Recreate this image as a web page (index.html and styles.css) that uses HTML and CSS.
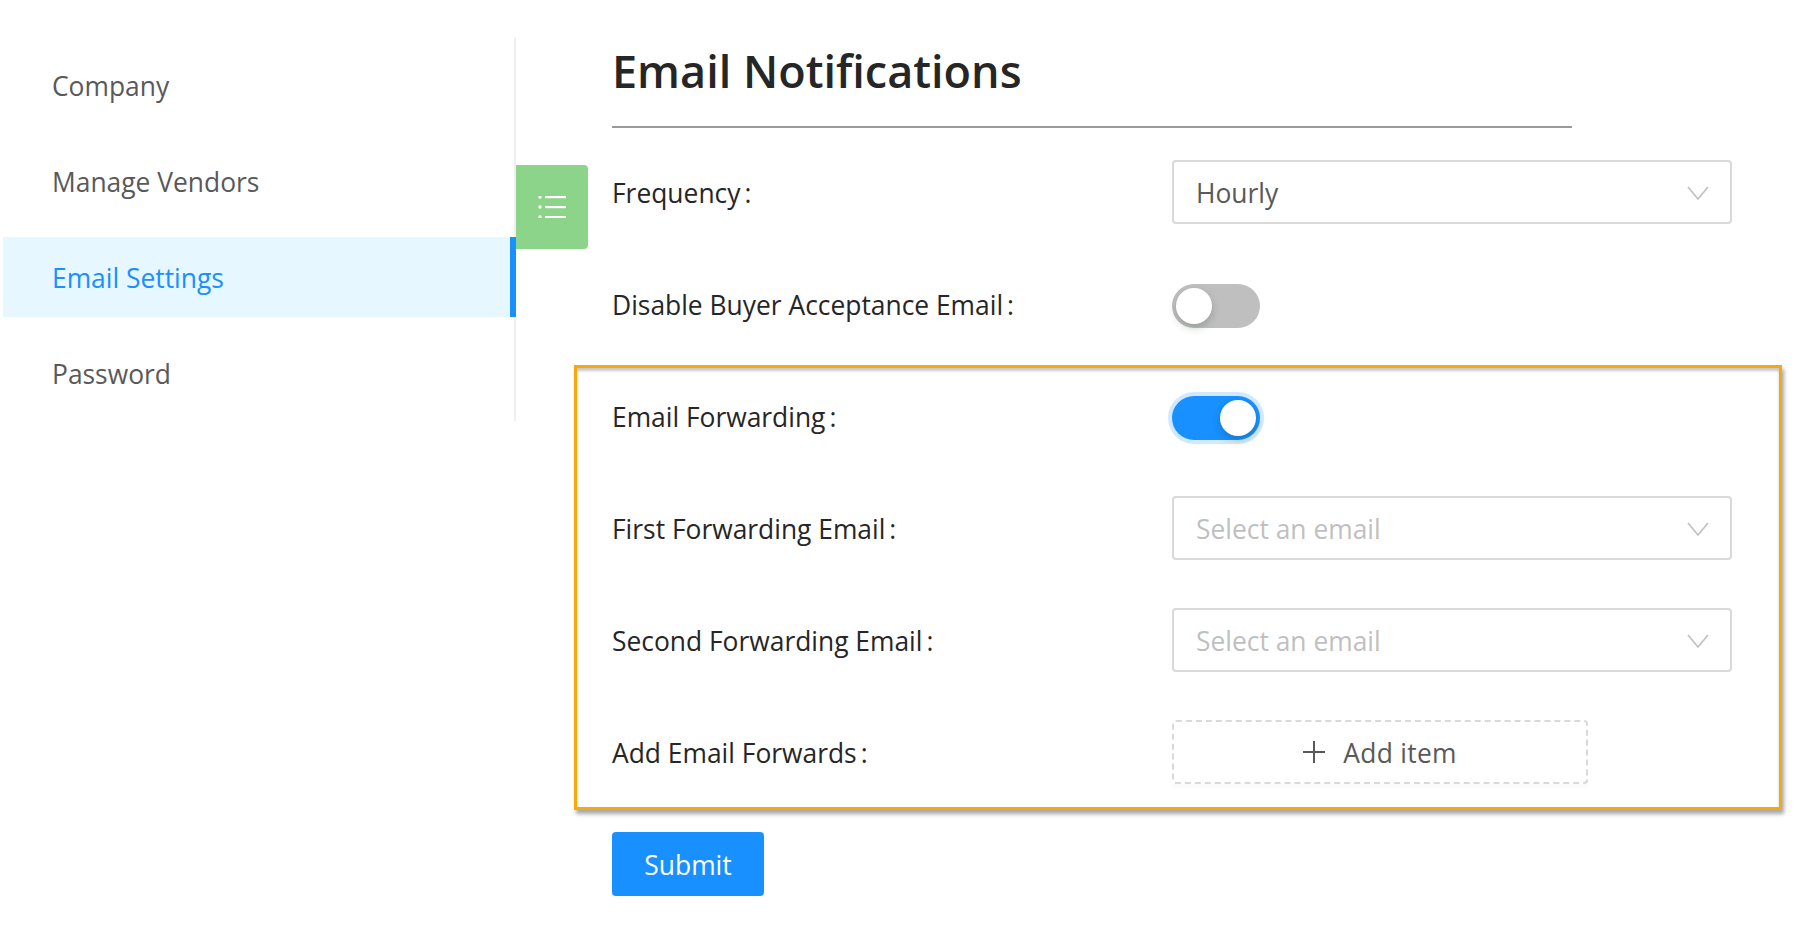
FILE: index.html
```html
<!DOCTYPE html>
<html lang="en">
<head>
  <meta charset="UTF-8" />
  <title>Email Notifications</title>
  <link rel="stylesheet" href="styles.css">
</head>
<body>
  <div class="page">
    <nav class="sidebar">
      <a class="menu-item">Company</a>
      <a class="menu-item">Manage Vendors</a>
      <a class="menu-item selected">Email Settings</a>
      <a class="menu-item">Password</a>
      <div class="menu-toggle">
        <svg width="28" height="22" viewBox="0 0 28 22">
          <g fill="#fff">
            <circle cx="2" cy="1" r="1.7"/><circle cx="2" cy="11" r="1.7"/><circle cx="2" cy="21" r="1.7"/>
            <rect x="7" y="0" width="21" height="2.2"/><rect x="7" y="10" width="21" height="2.2"/><rect x="7" y="20" width="21" height="2.2"/>
          </g>
        </svg>
      </div>
    </nav>

    <main class="content">
      <h1 class="title">Email Notifications</h1>

      <div class="row">
        <label class="label">Frequency<span class="colon">:</span></label>
        <div class="select"><span>Hourly</span><svg class="chevron" width="22" height="14" viewBox="0 0 22 14"><path d="M1 1l10 12L21 1" fill="none" stroke="#bfbfbf" stroke-width="1.6"/></svg></div>
      </div>

      <div class="row">
        <label class="label">Disable Buyer Acceptance Email<span class="colon">:</span></label>
        <div class="switch"><span class="thumb"></span></div>
      </div>

      <section class="forwarding">
        <div class="row">
          <label class="label">Email Forwarding<span class="colon">:</span></label>
          <div class="switch on"><span class="thumb"></span></div>
        </div>
        <div class="row">
          <label class="label">First Forwarding Email<span class="colon">:</span></label>
          <div class="select empty"><span>Select an email</span><svg class="chevron" width="22" height="14" viewBox="0 0 22 14"><path d="M1 1l10 12L21 1" fill="none" stroke="#bfbfbf" stroke-width="1.6"/></svg></div>
        </div>
        <div class="row">
          <label class="label">Second Forwarding Email<span class="colon">:</span></label>
          <div class="select empty"><span>Select an email</span><svg class="chevron" width="22" height="14" viewBox="0 0 22 14"><path d="M1 1l10 12L21 1" fill="none" stroke="#bfbfbf" stroke-width="1.6"/></svg></div>
        </div>
        <div class="row">
          <label class="label">Add Email Forwards<span class="colon">:</span></label>
          <button class="add-item"><svg width="22" height="22" viewBox="0 0 22 22"><path d="M11 0v22M0 11h22" stroke="#595959" stroke-width="2"/></svg><span class="add-text">Add item</span></button>
        </div>
      </section>

      <button class="submit">Submit</button>
    </main>
  </div>
</body>
</html>
```

FILE: styles.css
```css
body {
  margin: 0;
  background: #fff;
  font-family: "Open Sans", "Noto Sans", Arial, sans-serif;
  font-size: 26.4px;
  color: #262626;
}
.page {
  display: flex;
  align-items: flex-start;
}
.sidebar {
  position: relative;
  box-sizing: border-box;
  width: 513px;
  height: 384px;
  margin: 37px 0 0 3px;
  padding-top: 8px;
  border-right: 2px solid #f0f0f0;
}
.menu-item {
  box-sizing: border-box;
  display: flex;
  align-items: center;
  height: 80px;
  margin-bottom: 16px;
  padding: 2px 0 0 49px;
  color: #595959;
}
.menu-item.selected {
  margin-right: -2px;
  background: #e6f7ff;
  border-right: 6px solid #1890ff;
  color: #1890ff;
}
.menu-toggle {
  position: absolute;
  left: 513px;
  top: 128px;
  display: flex;
  align-items: center;
  justify-content: center;
  width: 72px;
  height: 84px;
  background: #8cd48a;
  border-radius: 0 4px 4px 0;
}
.content {
  width: 1120px;
  margin-left: 96px;
}
.title {
  box-sizing: border-box;
  width: 960px;
  height: 128px;
  margin: 0 0 32px;
  padding-top: 39px;
  border-bottom: 2px solid #999;
  font-size: 45px;
  font-weight: 600;
  line-height: 64px;
}
.row {
  display: flex;
  align-items: center;
  height: 64px;
  margin-bottom: 48px;
}
.label {
  flex: 0 0 560px;
  padding-top: 2px;
}
.colon {
  margin-left: 4px;
}
.select {
  box-sizing: border-box;
  flex: 0 0 560px;
  display: flex;
  align-items: center;
  justify-content: space-between;
  height: 64px;
  padding: 2px 21px 0 22px;
  border: 2px solid #d9d9d9;
  border-radius: 4px;
  color: #595959;
}
.select.empty {
  color: #bfbfbf;
}
.switch {
  position: relative;
  width: 88px;
  height: 44px;
  margin-top: 4px;
  background: #bfbfbf;
  border-radius: 22px;
}
.thumb {
  position: absolute;
  left: 4px;
  top: 4px;
  width: 36px;
  height: 36px;
  background: #fff;
  border-radius: 50%;
  box-shadow: 0 4px 8px rgba(0, 35, 11, 0.2);
}
.switch.on {
  background: #1890ff;
  box-shadow: 0 0 0 4px rgba(24, 144, 255, 0.2);
}
.switch.on .thumb {
  left: 48px;
}
.forwarding {
  margin: -19px -50px 22px -38px;
  padding: 16px 47px 23px 35px;
  border: 3px solid #f5a90a;
  box-shadow: 2px 4px 4px rgba(0, 0, 0, 0.35), inset 0 3px 3px rgba(0, 0, 0, 0.22);
}
.forwarding .row:last-child {
  margin-bottom: 0;
}
.add-item {
  display: flex;
  align-items: center;
  justify-content: center;
  gap: 18px;
  width: 416px;
  height: 64px;
  background: #fff;
  border: 2px dashed #d9d9d9;
  border-radius: 4px;
  box-shadow: 0 4px 0 rgba(0, 0, 0, 0.015);
  color: #595959;
  font: inherit;
}
.add-text {
  padding-top: 2px;
  letter-spacing: 0.3px;
}
.submit {
  display: block;
  width: 152px;
  height: 64px;
  padding-top: 2px;
  background: #1890ff;
  border: none;
  border-radius: 4px;
  box-shadow: 0 4px 0 rgba(0, 0, 0, 0.045);
  color: #fff;
  font: inherit;
}
```
